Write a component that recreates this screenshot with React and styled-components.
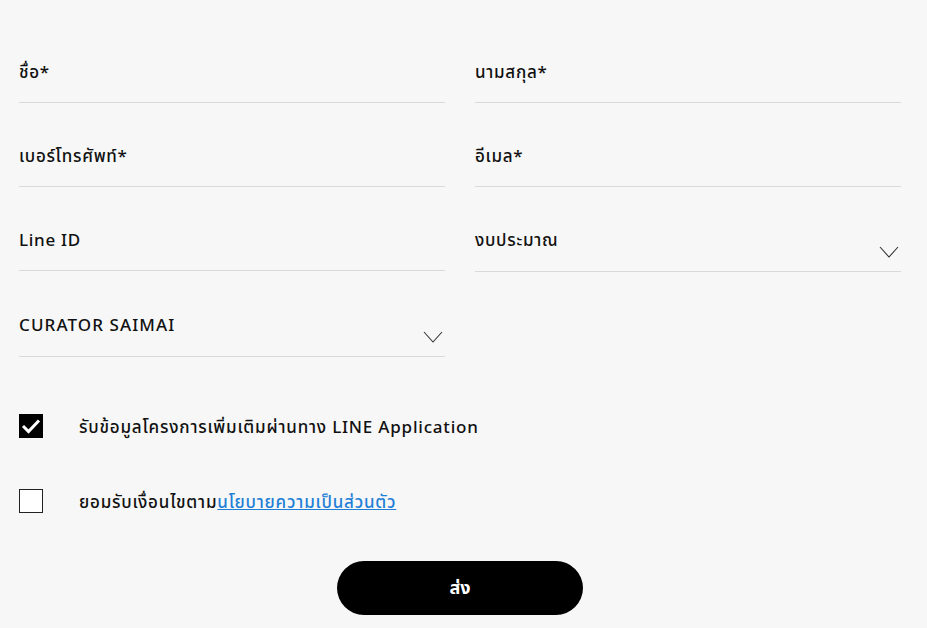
import React, { useState } from "react"
import styled, { createGlobalStyle } from "styled-components"

const GlobalStyle = createGlobalStyle`
  html, body {
    margin: 0;
    padding: 0;
    background: #f7f7f7;
  }
  body {
    font-family: "Noto Sans", "Noto Sans Thai", "Noto Sans Thai UI", Lato, sans-serif;
    color: #111;
  }
`

const Form = styled.form`
  width: 882px;
  padding: 43px 0 0 19px;
`

const Grid = styled.div`
  display: grid;
  grid-template-columns: 426px 426px;
  column-gap: 30px;
  row-gap: 24px;
  align-items: start;
`

const Field = styled.label`
  position: relative;
  display: block;
  height: ${(p) => (p.$select ? 61 : 60)}px;
  box-sizing: border-box;
  padding-top: 17px;
  border-bottom: 1px solid #d9d9d9;
`

const Label = styled.span`
  display: block;
  font-size: 17px;
  line-height: 24px;
  font-weight: 500;
  letter-spacing: ${(p) => (p.$caps ? "1.1px" : "0.7px")};
  color: #111;
`

const Chevron = styled.svg`
  position: absolute;
  right: 2px;
  top: 35px;
`

const Checks = styled.div`
  display: flex;
  flex-direction: column;
  gap: 51px;
  margin-top: 57px;
`

const CheckRow = styled.div`
  display: flex;
  align-items: center;
  gap: 36px;
  height: 24px;
  cursor: pointer;
`

const Box = styled.div`
  width: 24px;
  height: 24px;
  box-sizing: border-box;
  display: flex;
  align-items: center;
  justify-content: center;
  background: ${(p) => (p.$checked ? "#000" : "#fff")};
  border: 1px solid ${(p) => (p.$checked ? "#000" : "#222")};
`

const CheckText = styled.span`
  font-size: 17px;
  line-height: 24px;
  padding-top: 2px;
  font-weight: 500;
  letter-spacing: 0.8px;
  color: #111;
`

const Link = styled.a`
  color: #1f7fd6;
  text-decoration: underline;
`

const Actions = styled.div`
  display: flex;
  justify-content: center;
  margin-top: 48px;
`

const Submit = styled.button`
  width: 246px;
  height: 54px;
  border: none;
  border-radius: 27px;
  background: #000;
  color: #fff;
  font-family: inherit;
  font-size: 18px;
  font-weight: 700;
  cursor: pointer;
`

const ChevronIcon = () => (
  <Chevron width="20" height="12" viewBox="0 0 20 12">
    <path d="M1 1 L10 11 L19 1" fill="none" stroke="#333" strokeWidth="1.1" />
  </Chevron>
)

const CheckBox = ({ checked, onClick, children }) => (
  <CheckRow onClick={onClick}>
    <Box $checked={checked}>
      {checked && (
        <svg width="20" height="16" viewBox="0 0 20 16">
          <path d="M2 8 L7.5 13.5 L18 2.5" fill="none" stroke="#fff" strokeWidth="3" />
        </svg>
      )}
    </Box>
    <CheckText>{children}</CheckText>
  </CheckRow>
)

const fields = [
  { label: "ชื่อ*" },
  { label: "นามสกุล*" },
  { label: "เบอร์โทรศัพท์*" },
  { label: "อีเมล*" },
  { label: "Line ID" },
  { label: "งบประมาณ", select: true },
  { label: "CURATOR SAIMAI", select: true, caps: true },
]

export default function App() {
  const [lineOk, setLineOk] = useState(true)
  const [terms, setTerms] = useState(false)

  return (
    <>
      <GlobalStyle />
      <Form onSubmit={(e) => e.preventDefault()}>
        <Grid>
          {fields.map((f) => (
            <Field key={f.label} $select={f.select}>
              <Label $caps={f.caps}>{f.label}</Label>
              {f.select && <ChevronIcon />}
            </Field>
          ))}
        </Grid>
        <Checks>
          <CheckBox checked={lineOk} onClick={() => setLineOk(!lineOk)}>
            รับข้อมูลโครงการเพิ่มเติมผ่านทาง LINE Application
          </CheckBox>
          <CheckBox checked={terms} onClick={() => setTerms(!terms)}>
            ยอมรับเงื่อนไขตาม<Link href="#">นโยบายความเป็นส่วนตัว</Link>
          </CheckBox>
        </Checks>
        <Actions>
          <Submit type="submit">ส่ง</Submit>
        </Actions>
      </Form>
    </>
  )
}
